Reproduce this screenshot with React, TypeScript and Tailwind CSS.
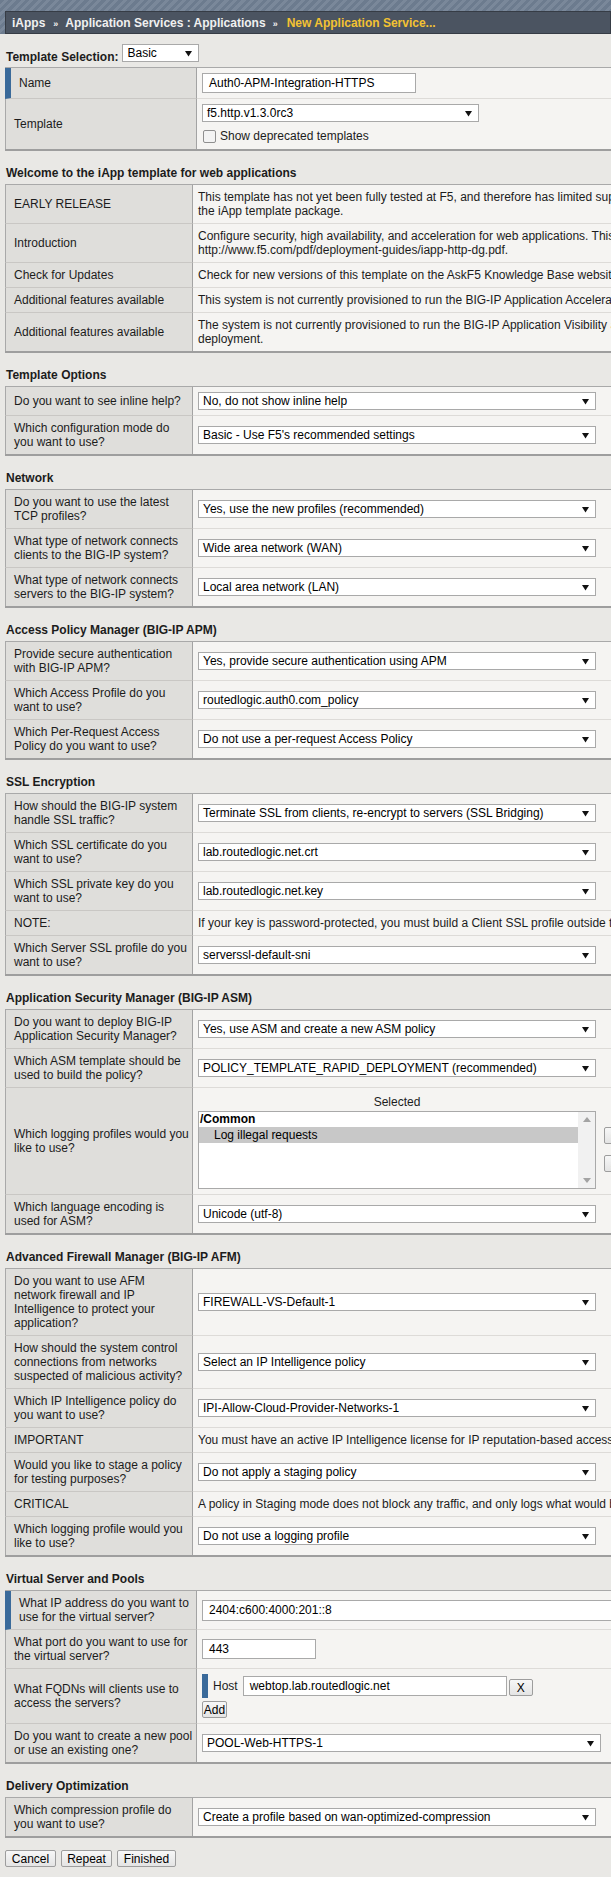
import React from "react";

type Row = { label: string[]; blue?: boolean; right: React.ReactNode };

function Arrow() {
  return (
    <svg width="7" height="7" viewBox="0 0 7 7" className="shrink-0">
      <path d="M0 1h7L3.5 6.5z" fill="#111" />
    </svg>
  );
}

function Select({ value, w = "w-[398px]" }: { value: string; w?: string }) {
  return (
    <div
      className={`${w} h-[18px] bg-white border border-[#a9a9a9] flex items-center justify-between pl-[4px] pr-[6px] text-black whitespace-nowrap overflow-hidden`}
    >
      <span>{value}</span>
      <Arrow />
    </div>
  );
}

function Lines({ lines }: { lines: string[] }) {
  return (
    <div>
      {lines.map((l, i) => (
        <div key={i} className="whitespace-nowrap">
          {l}
        </div>
      ))}
    </div>
  );
}

function Btn({ children, cls = "" }: { children: React.ReactNode; cls?: string }) {
  return (
    <div
      className={`h-[17px] bg-[linear-gradient(#f7f7f7,#e4e4e4)] border border-[#9d9d9d] rounded-[2px] flex items-center justify-center text-black leading-[14px] ${cls}`}
    >
      {children}
    </div>
  );
}

function Table({ rows, wide }: { rows: Row[]; wide?: boolean }) {
  return (
    <div className="w-[900px] ml-[5px] border-t border-[#a9a9a9] border-b-2 border-b-[#9e9e9e]">
      {rows.map((r, i) => {
        const last = i === rows.length - 1;
        return (
          <div key={i} className="flex">
            <div
              className={[
                "shrink-0 bg-[#dfdedb] border-r border-r-[#a3a3a3] pl-[8px] pr-[2px] py-[5px] flex flex-col justify-center text-[#1c1c1c]",
                wide ? "w-[192px]" : "w-[188px]",
                r.blue ? "border-l-[6px] border-l-[#3a6a9a]" : "border-l border-l-[#a9a9a9]",
                last ? "" : "border-b border-b-[#c9c7c4]",
              ].join(" ")}
            >
              {r.label.map((l, j) => (
                <div key={j} className="whitespace-nowrap">
                  {l}
                </div>
              ))}
            </div>
            <div
              className={[
                "flex-1 bg-[#f5f4f2] pl-[5px] py-[5px] flex flex-col justify-center text-[#1c1c1c]",
                last ? "" : "border-b border-b-[#dddbd8]",
              ].join(" ")}
            >
              {r.right}
            </div>
          </div>
        );
      })}
    </div>
  );
}

function Heading({ children }: { children: React.ReactNode }) {
  return <div className="pt-[15px] pb-[4px] pl-[6px] font-bold text-[#1c1c1c] whitespace-nowrap">{children}</div>;
}

const S = (v: string) => <Select value={v} />;

export default function App() {
  const logging = (
    <div className="flex items-start">
      <div className="w-[398px] flex flex-col">
        <div className="text-center mt-[2px]">Selected</div>
        <div className="mt-[2px] h-[78px] bg-white border border-[#a9a9a9] flex text-black">
          <div className="flex-1">
            <div className="font-bold pl-[1px] leading-[15px]">/Common</div>
            <div className="bg-[#c8c8c8] h-[16px] leading-[16px] pl-[15px]">Log illegal requests</div>
          </div>
          <div className="w-[17px] bg-[#f1f1f1] flex flex-col justify-between items-center py-[5px]">
            <svg width="8" height="5" viewBox="0 0 8 5">
              <path d="M0 5h8L4 0z" fill="#a3a3a3" />
            </svg>
            <svg width="8" height="5" viewBox="0 0 8 5">
              <path d="M0 0h8L4 5z" fill="#a3a3a3" />
            </svg>
          </div>
        </div>
      </div>
      <div className="ml-[8px] mt-[34px] flex flex-col gap-[11px]">
        <Btn cls="w-[28px] text-[#8b1a1a]">&lt;&lt;</Btn>
        <Btn cls="w-[28px] text-[#8b1a1a]">&gt;&gt;</Btn>
      </div>
    </div>
  );

  const fqdn = (
    <div className="flex flex-col">
      <div className="flex items-center h-[24px]">
        <div className="w-[6px] h-[24px] bg-[#3a6a9a]" />
        <span className="ml-[5px]">Host</span>
        <div className="ml-[5px] w-[264px] h-[20px] bg-white border border-[#a9a9a9] pl-[6px] flex items-center text-black">
          webtop.lab.routedlogic.net
        </div>
        <Btn cls="ml-[2px] w-[24px] mt-[3px]">X</Btn>
      </div>
      <Btn cls="mt-[3px] w-[25px]">Add</Btn>
    </div>
  );

  return (
    <div className="w-[611px] min-h-[1877px] overflow-hidden bg-[#e9e8e5] font-['Liberation_Sans',Arial,sans-serif] text-[12px] leading-[14px]">
      {/* header */}
      <div className="h-[34px] pt-[11px] bg-[repeating-linear-gradient(135deg,#6c7b8e_0px,#6c7b8e_3px,#7a889a_3px,#7a889a_6px)]">
        <div className="ml-[5px] h-[23px] bg-[#4b5461] border border-[#363c45] flex items-baseline pt-[4px] pl-[6px] font-bold text-[#f0f0f0] whitespace-nowrap">
          <span>iApps</span>
          <span className="text-[9px] ml-[8px] mr-[7px]">»</span>
          <span>Application Services : Applications</span>
          <span className="text-[9px] ml-[7px] mr-[9px]">»</span>
          <span className="text-[#f3c232]">New Application Service...</span>
        </div>
      </div>

      {/* template selection */}
      <div className="mt-[10px] mb-[3px] pl-[6px] flex items-start">
        <span className="font-bold mt-[6px] text-[#1c1c1c]">Template Selection:</span>
        <div className="ml-[4px]">
          <Select value="Basic" w="w-[77px]" />
        </div>
      </div>

      <Table
        wide
        rows={[
          {
            label: ["Name"],
            blue: true,
            right: (
              <div className="w-[214px] h-[20px] bg-white border border-[#a9a9a9] pl-[6px] flex items-center text-black">
                Auth0-APM-Integration-HTTPS
              </div>
            ),
          },
          {
            label: ["Template"],
            right: (
              <div className="flex flex-col">
                <Select value="f5.http.v1.3.0rc3" w="w-[277px]" />
                <div className="mt-[6px] h-[16px] flex items-center">
                  <span className="ml-[1px] w-[13px] h-[13px] rounded-[2px] border border-[#8f8f8f] bg-[#f3f3f3]" />
                  <span className="ml-[4px]">Show deprecated templates</span>
                </div>
              </div>
            ),
          },
        ]}
      />

      <Heading>Welcome to the iApp template for web applications</Heading>
      <Table
        rows={[
          {
            label: ["EARLY RELEASE"],
            right: (
              <Lines
                lines={[
                  "This template has not yet been fully tested at F5, and therefore has limited support. Please see the release notes included with",
                  "the iApp template package.",
                ]}
              />
            ),
          },
          {
            label: ["Introduction"],
            right: (
              <Lines
                lines={[
                  "Configure security, high availability, and acceleration for web applications. This template is documented in the deployment guide at",
                  "http://www.f5.com/pdf/deployment-guides/iapp-http-dg.pdf.",
                ]}
              />
            ),
          },
          {
            label: ["Check for Updates"],
            right: <Lines lines={["Check for new versions of this template on the AskF5 Knowledge Base website."]} />,
          },
          {
            label: ["Additional features available"],
            right: (
              <Lines
                lines={["This system is not currently provisioned to run the BIG-IP Application Acceleration Manager (AAM) module."]}
              />
            ),
          },
          {
            label: ["Additional features available"],
            right: (
              <Lines
                lines={[
                  "The system is not currently provisioned to run the BIG-IP Application Visibility and Reporting (AVR) module for this",
                  "deployment.",
                ]}
              />
            ),
          },
        ]}
      />

      <Heading>Template Options</Heading>
      <Table
        rows={[
          { label: ["Do you want to see inline help?"], right: S("No, do not show inline help") },
          {
            label: ["Which configuration mode do", "you want to use?"],
            right: S("Basic - Use F5's recommended settings"),
          },
        ]}
      />

      <Heading>Network</Heading>
      <Table
        rows={[
          {
            label: ["Do you want to use the latest", "TCP profiles?"],
            right: S("Yes, use the new profiles (recommended)"),
          },
          {
            label: ["What type of network connects", "clients to the BIG-IP system?"],
            right: S("Wide area network (WAN)"),
          },
          {
            label: ["What type of network connects", "servers to the BIG-IP system?"],
            right: S("Local area network (LAN)"),
          },
        ]}
      />

      <Heading>Access Policy Manager (BIG-IP APM)</Heading>
      <Table
        rows={[
          {
            label: ["Provide secure authentication", "with BIG-IP APM?"],
            right: S("Yes, provide secure authentication using APM"),
          },
          {
            label: ["Which Access Profile do you", "want to use?"],
            right: S("routedlogic.auth0.com_policy"),
          },
          {
            label: ["Which Per-Request Access", "Policy do you want to use?"],
            right: S("Do not use a per-request Access Policy"),
          },
        ]}
      />

      <Heading>SSL Encryption</Heading>
      <Table
        rows={[
          {
            label: ["How should the BIG-IP system", "handle SSL traffic?"],
            right: S("Terminate SSL from clients, re-encrypt to servers (SSL Bridging)"),
          },
          {
            label: ["Which SSL certificate do you", "want to use?"],
            right: S("lab.routedlogic.net.crt"),
          },
          {
            label: ["Which SSL private key do you", "want to use?"],
            right: S("lab.routedlogic.net.key"),
          },
          {
            label: ["NOTE:"],
            right: (
              <Lines
                lines={["If your key is password-protected, you must build a Client SSL profile outside this template."]}
              />
            ),
          },
          {
            label: ["Which Server SSL profile do you", "want to use?"],
            right: S("serverssl-default-sni"),
          },
        ]}
      />

      <Heading>Application Security Manager (BIG-IP ASM)</Heading>
      <Table
        rows={[
          {
            label: ["Do you want to deploy BIG-IP", "Application Security Manager?"],
            right: S("Yes, use ASM and create a new ASM policy"),
          },
          {
            label: ["Which ASM template should be", "used to build the policy?"],
            right: S("POLICY_TEMPLATE_RAPID_DEPLOYMENT (recommended)"),
          },
          { label: ["Which logging profiles would you", "like to use?"], right: logging },
          {
            label: ["Which language encoding is", "used for ASM?"],
            right: S("Unicode (utf-8)"),
          },
        ]}
      />

      <Heading>Advanced Firewall Manager (BIG-IP AFM)</Heading>
      <Table
        rows={[
          {
            label: ["Do you want to use AFM", "network firewall and IP", "Intelligence to protect your", "application?"],
            right: S("FIREWALL-VS-Default-1"),
          },
          {
            label: ["How should the system control", "connections from networks", "suspected of malicious activity?"],
            right: S("Select an IP Intelligence policy"),
          },
          {
            label: ["Which IP Intelligence policy do", "you want to use?"],
            right: S("IPI-Allow-Cloud-Provider-Networks-1"),
          },
          {
            label: ["IMPORTANT"],
            right: (
              <Lines lines={["You must have an active IP Intelligence license for IP reputation-based access control."]} />
            ),
          },
          {
            label: ["Would you like to stage a policy", "for testing purposes?"],
            right: S("Do not apply a staging policy"),
          },
          {
            label: ["CRITICAL"],
            right: (
              <Lines
                lines={["A policy in Staging mode does not block any traffic, and only logs what would be blocked."]}
              />
            ),
          },
          {
            label: ["Which logging profile would you", "like to use?"],
            right: S("Do not use a logging profile"),
          },
        ]}
      />

      <Heading>Virtual Server and Pools</Heading>
      <Table
        wide
        rows={[
          {
            label: ["What IP address do you want to", "use for the virtual server?"],
            blue: true,
            right: (
              <div className="w-[480px] h-[21px] bg-white border border-[#a9a9a9] pl-[6px] flex items-center text-black">
                2404:c600:4000:201::8
              </div>
            ),
          },
          {
            label: ["What port do you want to use for", "the virtual server?"],
            right: (
              <div className="w-[114px] h-[20px] bg-white border border-[#a9a9a9] pl-[6px] flex items-center text-black">
                443
              </div>
            ),
          },
          { label: ["What FQDNs will clients use to", "access the servers?"], right: fqdn },
          {
            label: ["Do you want to create a new pool", "or use an existing one?"],
            right: <Select value="POOL-Web-HTTPS-1" w="w-[399px]" />,
          },
        ]}
      />

      <Heading>Delivery Optimization</Heading>
      <Table
        rows={[
          {
            label: ["Which compression profile do", "you want to use?"],
            right: S("Create a profile based on wan-optimized-compression"),
          },
        ]}
      />

      <div className="mt-[12px] ml-[5px] flex gap-[5px]">
        <Btn cls="w-[51px]">Cancel</Btn>
        <Btn cls="w-[51px]">Repeat</Btn>
        <Btn cls="w-[59px]">Finished</Btn>
      </div>
    </div>
  );
}
